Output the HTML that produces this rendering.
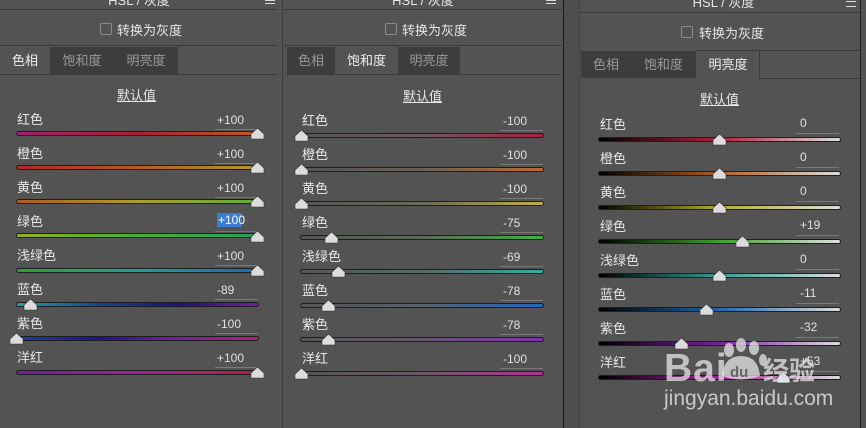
<!DOCTYPE html>
<html><head><meta charset="utf-8"><style>
*{margin:0;padding:0;box-sizing:border-box}
body{width:866px;height:428px;background:#535353;position:relative;overflow:hidden;font-family:"Liberation Sans","Noto Sans CJK SC",sans-serif;color:#e6e6e6;font-size:12px}
.a{position:absolute}
.hl{position:absolute;height:1px;background:#3a3a3a}
.vl{position:absolute;width:1px;background:#2e2e2e}
.lbl{position:absolute;font-size:13px;color:#e8e8e8;line-height:14px}
.val{position:absolute;font-size:12px;color:#e0e0e0;line-height:12px}
.ul{position:absolute;height:1px;background:#7a7a7a;width:43px}
.tr{position:absolute;height:5px;border:1px solid #1e1e1e;border-radius:3px}
.tab{position:absolute;font-size:13px;line-height:28px;text-align:center}
.cb{position:absolute;width:12px;height:12px;border:1px solid #8a8a8a;border-radius:2px}
</style></head><body>
<div class="vl" style="left:282px;top:0;height:428px;background:#3c3c3c"></div>
<div class="a" style="left:563px;top:0;width:17px;height:428px;background:#4e4e4e"></div>
<div class="vl" style="left:563px;top:0;height:428px;background:#1a1a1a"></div>
<div class="vl" style="left:579px;top:0;height:428px;background:#444"></div>
<div class="vl" style="left:860px;top:0;height:428px;background:#1e1e1e"></div>

<div class="a" style="left:0;top:-10px;width:278px;text-align:center;font-size:13px">HSL / 灰度</div>
<div class="a" style="left:284px;top:-10px;width:278px;text-align:center;font-size:13px">HSL / 灰度</div>
<div class="a" style="left:581px;top:-8px;width:285px;text-align:center;font-size:13px">HSL / 灰度</div>
<div class="a" style="left:265px;top:0;width:10px;height:4px;border-top:1px solid #ddd;border-bottom:1px solid #ddd"></div>
<div class="a" style="left:546px;top:0;width:10px;height:4px;border-top:1px solid #ddd;border-bottom:1px solid #ddd"></div>
<div class="a" style="left:846px;top:1px;width:10px;height:6px;border-top:1px solid #ddd;border-bottom:1px solid #ddd"></div>
<div class="hl" style="left:0;top:9px;width:278px"></div>
<div class="hl" style="left:284px;top:9px;width:278px"></div>
<div class="hl" style="left:580px;top:12px;width:280px"></div>

<div class="cb" style="left:100px;top:23px"></div><div class="a" style="left:117px;top:20px;font-size:13px">转换为灰度</div>
<div class="cb" style="left:385px;top:23px"></div><div class="a" style="left:402px;top:20px;font-size:13px">转换为灰度</div>
<div class="cb" style="left:681px;top:26px"></div><div class="a" style="left:699px;top:23px;font-size:13px">转换为灰度</div>
<div class="hl" style="left:0;top:45px;width:278px"></div>
<div class="hl" style="left:284px;top:45px;width:278px"></div>

<div class="a" style="left:50px;top:47px;width:128px;height:27px;background:#3d3d3d"></div>
<div class="tab" style="left:0;top:47px;width:50px;color:#eee">色相</div>
<div class="tab" style="left:50px;top:47px;width:64px;color:#999">饱和度</div>
<div class="tab" style="left:114px;top:47px;width:64px;color:#999">明亮度</div>
<div class="hl" style="left:0;top:74px;width:278px"></div>
<div class="a" style="left:287px;top:47px;width:48px;height:27px;background:#3d3d3d"></div>
<div class="a" style="left:398px;top:47px;width:62px;height:27px;background:#3d3d3d"></div>
<div class="tab" style="left:287px;top:47px;width:48px;color:#999">色相</div>
<div class="tab" style="left:335px;top:47px;width:63px;color:#eee">饱和度</div>
<div class="tab" style="left:398px;top:47px;width:62px;color:#999">明亮度</div>
<div class="hl" style="left:287px;top:74px;width:273px"></div>
<div class="a" style="left:581px;top:51px;width:115px;height:27px;background:#3d3d3d"></div>
<div class="tab" style="left:581px;top:51px;width:50px;color:#999">色相</div>
<div class="tab" style="left:631px;top:51px;width:65px;color:#999">饱和度</div>
<div class="tab" style="left:696px;top:51px;width:64px;color:#eee">明亮度</div>
<div class="hl" style="left:696px;top:50px;width:164px"></div>
<div class="vl" style="left:759px;top:50px;height:29px;background:#3a3a3a"></div>
<div class="hl" style="left:759px;top:78px;width:101px"></div>

<div class="a" style="left:117px;top:85px;font-size:13px;text-decoration:underline">默认值</div>
<div class="a" style="left:403px;top:86px;font-size:13px;text-decoration:underline">默认值</div>
<div class="a" style="left:700px;top:89px;font-size:13px;text-decoration:underline">默认值</div>

<!-- PANEL 1 -->
<div class="lbl" style="left:17px;top:113px">红色</div><div class="val" style="left:217px;top:114px">+100</div><div class="ul" style="left:215px;top:129px"></div>
<div class="tr" style="left:16px;top:131px;width:243px;background:linear-gradient(90deg,#a02070,#a82030,#c05a20)"></div>
<div class="lbl" style="left:17px;top:147px">橙色</div><div class="val" style="left:217px;top:148px">+100</div><div class="ul" style="left:215px;top:163px"></div>
<div class="tr" style="left:16px;top:165px;width:243px;background:linear-gradient(90deg,#b02828,#b85a20,#b09a20)"></div>
<div class="lbl" style="left:17px;top:181px">黄色</div><div class="val" style="left:217px;top:182px">+100</div><div class="ul" style="left:215px;top:197px"></div>
<div class="tr" style="left:16px;top:199px;width:243px;background:linear-gradient(90deg,#b05a20,#b0a020,#60b030)"></div>
<div class="lbl" style="left:17px;top:215px">绿色</div>
<div class="a" style="left:217px;top:213px;width:25px;height:14px;background:#3b7ed4"></div><div class="val" style="left:218px;top:214px;color:#fff">+100</div><div class="ul" style="left:215px;top:231px;background:#3b7ed4"></div>
<div class="tr" style="left:16px;top:233px;width:243px;background:linear-gradient(90deg,#90b020,#48b030,#20a060)"></div>
<div class="lbl" style="left:17px;top:249px">浅绿色</div><div class="val" style="left:217px;top:250px">+100</div><div class="ul" style="left:215px;top:265px"></div>
<div class="tr" style="left:16px;top:268px;width:243px;background:linear-gradient(90deg,#30a030,#20a098,#2068b0)"></div>
<div class="lbl" style="left:17px;top:283px">蓝色</div><div class="val" style="left:217px;top:284px">-89</div><div class="ul" style="left:215px;top:299px"></div>
<div class="tr" style="left:16px;top:302px;width:243px;background:linear-gradient(90deg,#20a0a0,#104890,#201080,#7020a0)"></div>
<div class="lbl" style="left:17px;top:317px">紫色</div><div class="val" style="left:217px;top:318px">-100</div><div class="ul" style="left:215px;top:333px"></div>
<div class="tr" style="left:16px;top:336px;width:243px;background:linear-gradient(90deg,#2040a0,#201090,#7820a0,#b02078)"></div>
<div class="lbl" style="left:17px;top:351px">洋红</div><div class="val" style="left:217px;top:352px">+100</div><div class="ul" style="left:215px;top:367px"></div>
<div class="tr" style="left:16px;top:370px;width:243px;background:linear-gradient(90deg,#7020a0,#a02098,#b02040)"></div>

<!-- PANEL 2 -->
<div class="lbl" style="left:302px;top:114px">红色</div><div class="val" style="left:503px;top:115px">-100</div><div class="ul" style="left:500px;top:130px"></div>
<div class="tr" style="left:300px;top:133px;width:244px;background:linear-gradient(90deg,#555,#6a5a5c,#b02040)"></div>
<div class="lbl" style="left:302px;top:148px">橙色</div><div class="val" style="left:503px;top:149px">-100</div><div class="ul" style="left:500px;top:164px"></div>
<div class="tr" style="left:300px;top:167px;width:244px;background:linear-gradient(90deg,#555,#6a6058,#c06830)"></div>
<div class="lbl" style="left:302px;top:182px">黄色</div><div class="val" style="left:503px;top:183px">-100</div><div class="ul" style="left:500px;top:198px"></div>
<div class="tr" style="left:300px;top:201px;width:244px;background:linear-gradient(90deg,#555,#6a6a58,#c0b040)"></div>
<div class="lbl" style="left:302px;top:216px">绿色</div><div class="val" style="left:503px;top:217px">-75</div><div class="ul" style="left:500px;top:232px"></div>
<div class="tr" style="left:300px;top:235px;width:244px;background:linear-gradient(90deg,#555,#5c6a58,#40b040)"></div>
<div class="lbl" style="left:302px;top:250px">浅绿色</div><div class="val" style="left:503px;top:251px">-69</div><div class="ul" style="left:500px;top:266px"></div>
<div class="tr" style="left:300px;top:269px;width:244px;background:linear-gradient(90deg,#555,#586a66,#30b0a0)"></div>
<div class="lbl" style="left:302px;top:284px">蓝色</div><div class="val" style="left:503px;top:285px">-78</div><div class="ul" style="left:500px;top:300px"></div>
<div class="tr" style="left:300px;top:303px;width:244px;background:linear-gradient(90deg,#555,#58606a,#2068c0)"></div>
<div class="lbl" style="left:302px;top:318px">紫色</div><div class="val" style="left:503px;top:319px">-78</div><div class="ul" style="left:500px;top:334px"></div>
<div class="tr" style="left:300px;top:337px;width:244px;background:linear-gradient(90deg,#555,#64586a,#8030b0)"></div>
<div class="lbl" style="left:302px;top:352px">洋红</div><div class="val" style="left:503px;top:353px">-100</div><div class="ul" style="left:500px;top:368px"></div>
<div class="tr" style="left:300px;top:371px;width:244px;background:linear-gradient(90deg,#555,#6a5866,#b03098)"></div>

<!-- PANEL 3 -->
<div class="lbl" style="left:600px;top:118px">红色</div><div class="val" style="left:800px;top:117px">0</div><div class="ul" style="left:796px;top:133px"></div>
<div class="tr" style="left:598px;top:137px;width:243px;background:linear-gradient(90deg,#000,#b02040,#ddd)"></div>
<div class="lbl" style="left:600px;top:152px">橙色</div><div class="val" style="left:800px;top:151px">0</div><div class="ul" style="left:796px;top:167px"></div>
<div class="tr" style="left:598px;top:171px;width:243px;background:linear-gradient(90deg,#000,#b06020,#ddd)"></div>
<div class="lbl" style="left:600px;top:186px">黄色</div><div class="val" style="left:800px;top:185px">0</div><div class="ul" style="left:796px;top:201px"></div>
<div class="tr" style="left:598px;top:205px;width:243px;background:linear-gradient(90deg,#000,#b0b030,#ddd)"></div>
<div class="lbl" style="left:600px;top:220px">绿色</div><div class="val" style="left:800px;top:219px">+19</div><div class="ul" style="left:796px;top:235px"></div>
<div class="tr" style="left:598px;top:239px;width:243px;background:linear-gradient(90deg,#000,#40a030,#ddd)"></div>
<div class="lbl" style="left:600px;top:254px">浅绿色</div><div class="val" style="left:800px;top:253px">0</div><div class="ul" style="left:796px;top:269px"></div>
<div class="tr" style="left:598px;top:273px;width:243px;background:linear-gradient(90deg,#000,#30a098,#ddd)"></div>
<div class="lbl" style="left:600px;top:288px">蓝色</div><div class="val" style="left:800px;top:287px">-11</div><div class="ul" style="left:796px;top:303px"></div>
<div class="tr" style="left:598px;top:307px;width:243px;background:linear-gradient(90deg,#000,#2068b0,#ddd)"></div>
<div class="lbl" style="left:600px;top:322px">紫色</div><div class="val" style="left:800px;top:321px">-32</div><div class="ul" style="left:796px;top:337px"></div>
<div class="tr" style="left:598px;top:341px;width:243px;background:linear-gradient(90deg,#000,#7820a0,#ddd)"></div>
<div class="lbl" style="left:600px;top:356px">洋红</div><div class="val" style="left:800px;top:355px">+53</div><div class="ul" style="left:796px;top:371px"></div>
<div class="tr" style="left:598px;top:375px;width:243px;background:linear-gradient(90deg,#000,#a02098,#ddd)"></div>

<svg class="a" style="left:0;top:0" width="866" height="428">
<defs><polygon id="t" points="6.5,0 13,6 13,11 0,11 0,6" fill="#dcdcdc" stroke="#333" stroke-width="0.6"/></defs>
<use href="#t" x="251" y="128"/><use href="#t" x="251" y="162"/><use href="#t" x="251" y="196"/><use href="#t" x="251" y="231"/>
<use href="#t" x="251" y="265"/><use href="#t" x="24" y="299"/><use href="#t" x="10" y="333"/><use href="#t" x="251" y="367"/>
<use href="#t" x="295" y="130"/><use href="#t" x="295" y="164"/><use href="#t" x="295" y="198"/><use href="#t" x="325" y="232"/>
<use href="#t" x="332" y="266"/><use href="#t" x="322" y="300"/><use href="#t" x="322" y="334"/><use href="#t" x="295" y="368"/>
<use href="#t" x="713" y="134"/><use href="#t" x="713" y="168"/><use href="#t" x="713" y="202"/><use href="#t" x="736" y="236"/>
<use href="#t" x="713" y="270"/><use href="#t" x="700" y="304"/><use href="#t" x="675" y="338"/><use href="#t" x="777" y="372"/>
<g fill="rgba(230,230,230,0.75)">
<ellipse cx="729" cy="350" rx="5" ry="7"/><ellipse cx="741" cy="345" rx="5" ry="7"/><ellipse cx="754" cy="348" rx="5" ry="7"/><ellipse cx="763" cy="360" rx="4" ry="6"/>
<path d="M722 376 Q724 356 741 356 Q758 356 760 376 Q741 383 722 376Z"/>
</g>
<text x="730" y="377" font-family="Liberation Sans" font-weight="bold" font-size="15" fill="#666">du</text>
</svg>
<div class="a" style="left:664px;top:349px;font-size:39px;font-weight:bold;color:rgba(230,230,230,0.75);line-height:40px;letter-spacing:1px">Bai</div>
<div class="a" style="left:763px;top:357px;font-size:26px;font-weight:bold;color:rgba(230,230,230,0.75);line-height:28px">经验</div>
<div class="a" style="left:664px;top:387px;font-size:21px;color:rgba(230,230,230,0.8);line-height:24px">jingyan.baidu.com</div>
</body></html>
